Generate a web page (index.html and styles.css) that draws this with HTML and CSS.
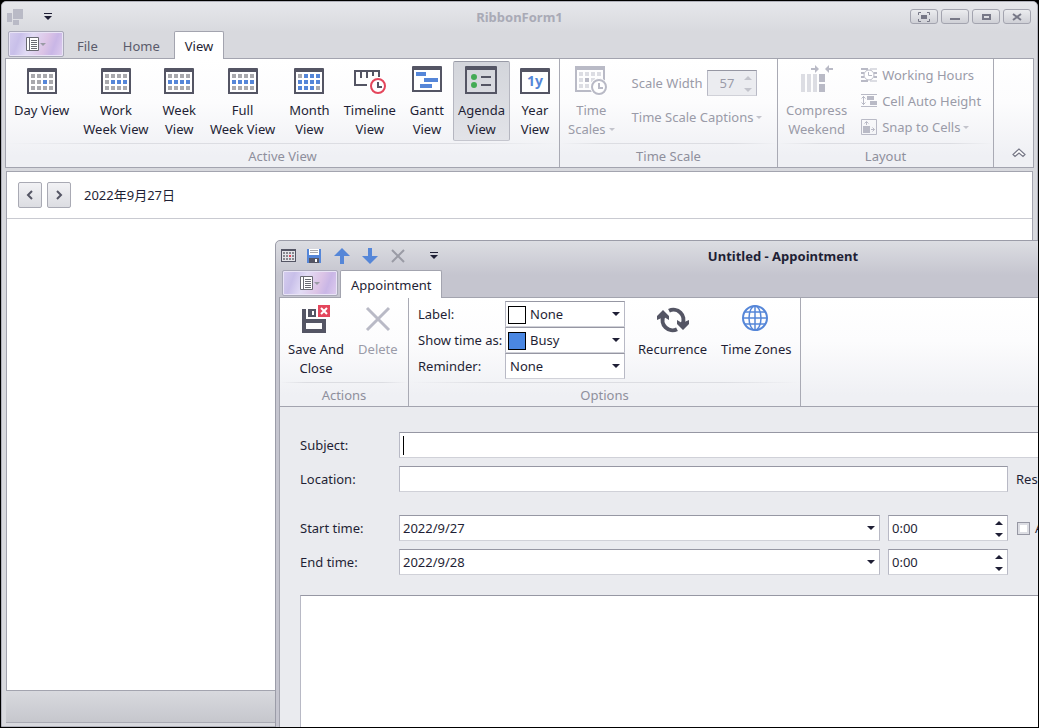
FILE: index.html
```html
<!DOCTYPE html>
<html lang="en">
<head>
    <meta charset="UTF-8">
    <meta name="viewport" content="width=device-width, initial-scale=1.0">
    <title>RibbonForm1</title>
    <link rel="stylesheet" href="styles.css">
</head>
<body>
    <!-- Shared icon parts -->
    <svg class="defs" width="0" height="0">
        <defs>
            <g id="frame">
                <path fill="#545564" fill-rule="evenodd" d="M1 4q0-1 1-1h28q1 0 1 1v25H1zM3 7v20h26V7z"/>
                <path fill="#fff" d="M3 7h26v20H3z"/>
            </g>
            <path id="cells" d="M5 9h4v4H5zM11 9h4v4h-4zM17 9h4v4h-4zM23 9h4v4h-4zM5 15h4v4H5zM11 15h4v4h-4zM17 15h4v4h-4zM23 15h4v4h-4zM5 21h4v4H5zM11 21h4v4h-4zM17 21h4v4h-4zM23 21h4v4h-4z"/>
            <g id="menu">
                <path fill="#fff" stroke="#696a72" d="M.5 .5h12v13H.5z"/>
                <path fill="none" stroke="#696a72" d="M3.500 0v14M5 3.500h6M5 5.500h6M5 7.500h6M5 9.500h6M5 11.500h6"/>
                <path fill="#9a9ba5" d="M14 6h6l-3 3z"/>
            </g>
            <path id="customize" fill="#1f1f35" d="M0 0h8v1H0zM0 3h8L4 7z"/>
        </defs>
    </svg>

    <div class="desktop">
        <main class="window main-window">
            <header class="titlebar inactive">
                <div class="quick-access">
                    <svg class="logo" width="16" height="16" fill="#b9bac6"><path d="M0 4h5v9H0zM6 0h10v10H6zM6 11h6v5H6z"/></svg>
                    <button class="tool" aria-label="Customize"><svg width="8" height="8"><use href="#customize"/></svg></button>
                </div>
                <h1>RibbonForm1</h1>
                <div class="window-buttons">
                    <button aria-label="Full screen"><svg width="12" height="10" fill="none" stroke="#777887"><path d="M3 .5H.5V3M9 .5h2.500V3M.5 7v2.500H3M11.500 7v2.500H9"/><path stroke-width="2" d="M4 4h4v2H4z"/></svg></button>
                    <button aria-label="Minimize"><svg width="12" height="10"><path fill="#777887" d="M1 6h10v2H1z"/></svg></button>
                    <button aria-label="Maximize"><svg width="12" height="10"><path fill="none" stroke="#777887" stroke-width="2" d="M3 3h7v4H3z"/></svg></button>
                    <button aria-label="Close"><svg width="12" height="10"><path fill="none" stroke="#777887" stroke-width="2" d="M2 2l8 6M10 2L2 8"/></svg></button>
                </div>
            </header>
            <nav class="tabs">
                <button class="app-button" aria-label="Application menu"><svg width="20" height="14"><use href="#menu"/></svg></button>
                <button class="tab">File</button>
                <button class="tab">Home</button>
                <button class="tab active">View</button>
            </nav>
            <div class="ribbon ribbon-main">
                <section class="group">
                    <div class="items">
                        <button class="large"><svg width="32" height="32"><use href="#frame"/><use href="#cells" fill="#a9a9ad"/><path fill="#5586d8" d="M17 15h4v4h-4z"/></svg><span>Day View</span></button>
                        <button class="large"><svg width="32" height="32"><use href="#frame"/><use href="#cells" fill="#a9a9ad"/><path fill="#5586d8" d="M11 15h4v4h-4zM17 15h4v4h-4zM23 15h4v4h-4z"/></svg><span>Work<br>Week View</span></button>
                        <button class="large"><svg width="32" height="32"><use href="#frame"/><use href="#cells" fill="#a9a9ad"/><path fill="#5586d8" d="M5 15h4v4H5zM11 15h4v4h-4zM17 15h4v4h-4zM23 15h4v4h-4z"/></svg><span>Week<br>View</span></button>
                        <button class="large"><svg width="32" height="32"><use href="#frame"/><use href="#cells" fill="#a9a9ad"/><path fill="#5586d8" d="M5 15h4v4H5zM11 15h4v4h-4zM17 15h4v4h-4zM23 15h4v4h-4z"/></svg><span>Full<br>Week View</span></button>
                        <button class="large"><svg width="32" height="32"><use href="#frame"/><use href="#cells" fill="#5586d8"/><path fill="#a9a9ad" d="M5 9h4v4H5zM23 21h4v4h-4z"/></svg><span>Month<br>View</span></button>
                        <button class="large"><svg width="32" height="32" fill="none" stroke="#545564" stroke-width="2">
                            <path d="M13 20H1V6h24v6M7 6v7M13 6v7M19 6v5"/>
                            <circle cx="24" cy="21" r="9" fill="#fff" stroke="none"/>
                            <circle cx="24" cy="21" r="7" fill="#fff" stroke="#e4465c"/>
                            <path d="M24 17v5h4"/>
                        </svg><span>Timeline<br>View</span></button>
                        <button class="large"><svg width="32" height="32"><path fill="#545564" d="M1 2q0-1 1-1h28q1 0 1 1v25H1z"/><path fill="#fff" d="M3 5h26v20H3z"/><path fill="#5586d8" d="M5 7h10v4H5zM13 13h14v4H13zM9 19h12v4H9z"/></svg><span>Gantt<br>View</span></button>
                        <button class="large selected"><svg width="32" height="32"><path fill="#545564" fill-rule="evenodd" d="M0 2q0-1 1-1h30q1 0 1 1v27H0zM2 5v22h28V5z"/><path fill="#44ab55" d="M6 12a3 3 0 1 0 6 0a3 3 0 1 0-6 0M6 20a3 3 0 1 0 6 0a3 3 0 1 0-6 0"/><path fill="#545564" d="M16 11h10v2H16zM16 19h10v2H16z"/></svg><span>Agenda<br>View</span></button>
                        <button class="large"><svg width="32" height="32"><use href="#frame"/><text class="icon-text" x="16" y="21" text-anchor="middle">1y</text></svg><span>Year<br>View</span></button>
                    </div>
                    <h2>Active View</h2>
                </section>
                <section class="group">
                    <div class="items">
                        <button class="large" disabled><svg width="32" height="32">
                            <path fill="#b9bac6" fill-rule="evenodd" d="M0 1h30v26H0zM2 5v20h26V5z"/>
                            <use href="#cells" x="-1" y="-2" fill="#dcdde3"/>
                            <path fill="#b9bac6" d="M10 13h4v4h-4z"/>
                            <circle cx="24" cy="22" r="9" fill="#fff"/>
                            <circle cx="24" cy="22" r="7" fill="#fff" stroke="#b9bac6" stroke-width="2"/>
                            <path fill="none" stroke="#b9bac6" stroke-width="2" d="M24 18v5h4"/>
                        </svg><span>Time<br><span class="drop">Scales</span></span></button>
                        <div class="scale-options">
                            <div class="scale-width">
                                <label for="scaleWidth">Scale Width</label>
                                <div class="field spin">
                                    <input type="text" id="scaleWidth" value="57" disabled>
                                    <span class="spin-buttons"><button aria-label="Increase" disabled></button><button aria-label="Decrease" disabled></button></span>
                                </div>
                            </div>
                            <button class="small" disabled><span class="drop">Time Scale Captions</span></button>
                        </div>
                    </div>
                    <h2>Time Scale</h2>
                </section>
                <section class="group">
                    <div class="items">
                        <button class="large" disabled><svg width="32" height="32">
                            <path fill="#dcdde3" d="M0 9h4v18H0zM6 9h4v18H6zM12 9h4v18h-4z"/>
                            <path fill="#b9bac6" d="M18 9h6v8h-6zM18 19h6v8h-6zM10 3h4V0l4 4-4 4V5h-4zM32 3h-4V0l-4 4 4 4V5h4z"/>
                        </svg><span>Compress<br>Weekend</span></button>
                        <div class="small-list">
                            <button class="small" disabled><svg width="16" height="16">
                                <path fill="#b9bac6" d="M0 1h7v2H0zM0 5h3v2H0zM13 5h3v2h-3zM0 9h3v2H0zM13 9h3v2h-3zM0 13h7v2H0z"/>
                                <path fill="#dcdde3" d="M9 1h7v2H9zM9 13h7v2H9z"/>
                                <circle cx="8" cy="8" r="5" fill="#fff" stroke="#b9bac6"/><path fill="none" stroke="#b9bac6" d="M7.500 5v3.500H11"/>
                            </svg>Working Hours</button>
                            <button class="small" disabled><svg width="16" height="16">
                                <path fill="#b9bac6" d="M0 1h16v1H0zM0 13h16v1H0zM6 3h7v4H6zM9 8h7v4H9z"/>
                                <path fill="none" stroke="#b9bac6" d="M2.500 3v9M.5 5.500l2-2 2 2M.5 9.500l2 2 2-2"/>
                            </svg>Cell Auto Height</button>
                            <button class="small" disabled><svg width="16" height="16">
                                <path fill="#b9bac6" d="M2 7h7v7H2z"/>
                                <path fill="none" stroke="#b9bac6" d="M.5 .5h15v15H.5zM5.500 6V2.500M3.500 4.500l2-2 2 2M10 10.500h3.500M11.500 8.500l2 2-2 2"/>
                            </svg><span class="drop">Snap to Cells</span></button>
                        </div>
                    </div>
                    <h2>Layout</h2>
                </section>
                <button class="collapse" aria-label="Collapse ribbon"><svg width="14" height="10"><path fill="#fff" stroke="#777887" stroke-width="1.200" d="M7 1L1 6.500 3 8.500 7 5l4 3.500 2-2z"/></svg></button>
            </div>
            <div class="agenda">
                <div class="agenda-header">
                    <button aria-label="Previous"><svg width="8" height="10"><path d="M6 1L2 5l4 4"/></svg></button>
                    <button aria-label="Next"><svg width="8" height="10"><path d="M2 1l4 4-4 4"/></svg></button>
                    <span lang="zh">2022年9月27日</span>
                </div>
            </div>
            <footer class="statusbar"></footer>
        </main>

        <div class="window dialog" role="dialog" aria-labelledby="dialogTitle">
            <header class="titlebar">
                <div class="quick-access">
                    <svg class="logo" width="16" height="16"><path fill="#545564" d="M0 1h15v13H0z"/><path fill="#e4e4e9" d="M1 3h13v10H1z"/><path fill="#88888f" d="M2 4h2v2H2zM5 4h2v2H5zM8 4h2v2H8zM11 4h2v2h-2zM2 7h2v2H2zM5 7h2v2H5zM11 7h2v2h-2zM2 10h2v2H2zM5 10h2v2H5zM8 10h2v2H8zM11 10h2v2h-2z"/><path fill="#e4465c" d="M8 7h2v2H8z"/></svg>
                    <button class="tool" aria-label="Save"><svg width="16" height="16"><path fill="#5586d8" d="M1 1h14v14H1z"/><path fill="#fff" d="M3 1h10v6H3z"/><path fill="#545564" d="M3 10h10v5H3z"/><path fill="#fff" d="M9 11h2v3H9z"/><path stroke="#a9a9ad" d="M4 2.500h8M4 4.500h8"/></svg></button>
                    <button class="tool" aria-label="Previous item"><svg width="16" height="16"><path fill="#5586d8" d="M8 0l8 8h-6v8H6V8H0z"/></svg></button>
                    <button class="tool" aria-label="Next item"><svg width="16" height="16"><path fill="#5586d8" d="M8 16l8-8h-6V0H6v8H0z"/></svg></button>
                    <button class="tool" aria-label="Delete item"><svg width="16" height="16"><path stroke="#9a9ba5" stroke-width="2" d="M2 2l12 12M14 2L2 14"/></svg></button>
                    <button class="tool customize" aria-label="Customize"><svg width="8" height="8"><use href="#customize"/></svg></button>
                </div>
                <h1 id="dialogTitle">Untitled - Appointment</h1>
            </header>
            <nav class="tabs">
                <button class="app-button" aria-label="Application menu"><svg width="20" height="14"><use href="#menu"/></svg></button>
                <button class="tab active">Appointment</button>
            </nav>
            <div class="ribbon ribbon-dialog">
                <section class="group">
                    <div class="items">
                        <button class="large"><svg width="32" height="32">
                            <path fill="#545564" fill-rule="evenodd" d="M2 5h4v10h20v14H2zM6 19v6h16v-6z"/>
                            <path fill="#545564" fill-rule="evenodd" d="M8 5h8v8H8zM12 7v4h2V7z"/>
                            <path fill="#e4465c" d="M18 1h12v12H18z"/>
                            <path stroke="#fff" stroke-width="2" d="M21 4l6 6M27 4l-6 6"/>
                        </svg><span>Save And<br>Close</span></button>
                        <button class="large" disabled><svg width="32" height="32"><path stroke="#b9bac6" stroke-width="3" d="M5 4l22 22M27 4L5 26"/></svg><span>Delete</span></button>
                    </div>
                    <h2>Actions</h2>
                </section>
                <section class="group">
                    <div class="items">
                        <div class="combos">
                            <label for="label">Label:</label>
                            <div class="field combo swatch"><select id="label"><option>None</option></select></div>
                            <label for="status">Show time as:</label>
                            <div class="field combo swatch busy"><select id="status"><option>Busy</option></select></div>
                            <label for="reminder">Reminder:</label>
                            <div class="field combo"><select id="reminder"><option>None</option></select></div>
                        </div>
                        <button class="large"><svg width="32" height="32">
                            <path fill="none" stroke="#545564" stroke-width="4" d="M20 25.200A10 10 0 0 1 6.500 12M12 6.800A10 10 0 0 1 25.500 20"/>
                            <path fill="#545564" d="M6 6l6 6v4l-5-3-7 3v-4zM26 26l-6-6v-4l5 3 7-3v4z"/>
                        </svg><span>Recurrence</span></button>
                        <button class="large"><svg width="32" height="32" fill="none" stroke="#5586d8" stroke-width="1.500"><circle cx="15" cy="14" r="12" stroke-width="2"/><ellipse cx="15" cy="14" rx="6" ry="12"/><path d="M15 2v24M3 14h24M5 8h20M5 20h20"/></svg><span>Time Zones</span></button>
                    </div>
                    <h2>Options</h2>
                </section>
            </div>
            <form class="appointment">
                <div class="fields">
                    <label for="subject">Subject:</label>
                    <div class="field subject"><input type="text" id="subject"></div>
                    <label for="location">Location:</label>
                    <div class="field location"><input type="text" id="location"></div>
                    <span>Resource:</span>
                </div>
                <div class="fields times">
                    <label for="startDate">Start time:</label>
                    <div class="field combo"><input type="text" id="startDate" value="2022/9/27"></div>
                    <div class="field spin">
                        <input type="text" aria-label="Start hour" value="0:00">
                        <span class="spin-buttons"><button type="button" aria-label="Later"></button><button type="button" aria-label="Earlier"></button></span>
                    </div>
                    <label class="all-day"><input type="checkbox">All day event</label>
                    <label for="endDate">End time:</label>
                    <div class="field combo"><input type="text" id="endDate" value="2022/9/28"></div>
                    <div class="field spin">
                        <input type="text" aria-label="End hour" value="0:00">
                        <span class="spin-buttons"><button type="button" aria-label="Later"></button><button type="button" aria-label="Earlier"></button></span>
                    </div>
                </div>
                <textarea class="memo" aria-label="Description"></textarea>
            </form>
        </div>
    </div>
</body>
</html>
```
FILE: styles.css
```css
* {
    box-sizing: border-box;
}
body {
    margin: 0;
    background: #000;
    color: #1f1f35;
    font-family: "Noto Sans", "Noto Sans CJK SC", sans-serif;
    font-size: 13px;
    line-height: 19px;
}
button, input, select, textarea {
    margin: 0;
    padding: 0;
    border: 0;
    background: none;
    color: inherit;
    font: inherit;
    outline: none;
}
h1, h2 {
    margin: 0;
    font-size: 13px;
    line-height: 19px;
}
.defs {
    position: absolute;
}
.desktop {
    position: relative;
    height: 100vh;
    border: 1px solid #000;
    overflow: clip;
}

/* Windows */
.window {
    display: flex;
    flex-direction: column;
    padding: 0 3px;
    border: 1px solid #9b9ca8;
    border-radius: 5px 5px 0 0;
}
.main-window {
    height: 100%;
    padding-bottom: 3px;
    border-color: #b0b1bb;
    background: #d8d9de linear-gradient(#e6e7eb, #d8d9de 30px) no-repeat;
}
.dialog {
    position: absolute;
    top: 239px;
    left: 274px;
    width: 1016px;
    height: 640px;
    background: #c5c5cf linear-gradient(#dcdde2, #c5c5cf 34px) no-repeat;
}
.titlebar {
    display: grid;
    grid-template-columns: 1fr auto 1fr;
    align-items: center;
    height: 29px;
    flex: none;
}
.titlebar h1 {
    grid-column: 2;
    padding-top: 2px;
}
.inactive h1 {
    color: #a9aab6;
}
.quick-access {
    display: flex;
    align-items: center;
    gap: 12px;
    padding-left: 2px;
}
.tool {
    display: flex;
    justify-content: center;
    width: 16px;
}
.inactive .tool {
    margin-left: 5px;
}
.customize {
    margin-left: 8px;
}
.dialog .quick-access .logo {
    margin-right: -3px;
}
.window-buttons {
    display: flex;
    justify-content: flex-end;
    gap: 3px;
    padding-right: 3px;
}
.window-buttons button {
    display: flex;
    justify-content: center;
    align-items: center;
    width: 28px;
    height: 15px;
    border: 1px solid #a3a4af;
    border-radius: 3px;
    background: linear-gradient(#ebecef, #cfd0d6);
}

/* Tabs */
.tabs {
    display: flex;
    gap: 3px;
    height: 28px;
    flex: none;
    margin-bottom: -1px;
    padding-left: 3px;
    z-index: 1;
}
.app-button {
    display: flex;
    justify-content: center;
    align-items: center;
    width: 56px;
    height: 26px;
    margin-right: -1px;
    border: 1px solid #a9a9b9;
    border-radius: 2px;
    background: linear-gradient(110deg, #d5cdee, #c8bfe9 20%, #e2dcf5 40%, #dcc4e6 65%, #c9b6e6 80%, #dfcdee);
    box-shadow: inset 0 0 0 1px #e9e4f6;
}
.tab {
    padding: 2px 10px 0;
    border: 1px solid transparent;
    color: #5a5b6b;
}
.tab.active {
    border-color: #a3a4af;
    border-bottom: 0;
    border-radius: 2px 2px 0 0;
    background: #fff;
    color: #1f1f35;
}

/* Ribbon */
.ribbon {
    display: grid;
    height: 110px;
    flex: none;
    border: 1px solid #a3a4af;
    background: linear-gradient(#fff, #fcfcfd 40%, #eff0f4 90%);
}
.ribbon-main {
    grid-template-columns: 554px 218px 216px 1fr;
}
.ribbon-dialog {
    grid-template-columns: 129px 392px 1fr;
}
.group {
    display: flex;
    flex-direction: column;
    border-right: 1px solid #a9aab4;
}
.items {
    display: flex;
    flex: 1;
    gap: 4px;
    padding: 2px 3px;
}
.group h2 {
    height: 24px;
    padding-top: 4px;
    background: linear-gradient(90deg, transparent, #dcdde2 20%, #dcdde2 80%, transparent) top / 100% 1px no-repeat;
    color: #8e8f9c;
    font-weight: normal;
    text-align: center;
}
.large {
    display: flex;
    flex-direction: column;
    align-items: center;
    gap: 4px;
    height: 80px;
    padding: 3px 4px;
    border: 1px solid transparent;
    border-radius: 2px;
    text-align: center;
    white-space: nowrap;
}
.large svg {
    flex: none;
}
.large.selected {
    border-color: #989aa6 #b5b6c0 #c5c6ce;
    background: linear-gradient(#d3d5db, #e2e3e8);
}
button:disabled, .scale-width {
    color: #9a9ba8;
}
.icon-text {
    fill: #5586d8;
    font: bold 14px "Noto Sans", sans-serif;
}
.drop::after {
    content: "";
    display: inline-block;
    margin-left: 3px;
    border: 3px solid transparent;
    border-top-color: #c3c4cc;
    border-bottom: 0;
    vertical-align: 3px;
}
.scale-options {
    display: flex;
    flex-direction: column;
    align-items: flex-start;
    gap: 12px;
    padding: 9px 0 0 8px;
}
.scale-width {
    display: flex;
    align-items: center;
    gap: 4px;
}
.scale-width .field {
    width: 50px;
    background: #ebecf0;
}
.scale-width .field input {
    padding-left: 12px;
}
.small-list {
    display: flex;
    flex-direction: column;
    padding: 1px 0 0 5px;
}
.small {
    display: flex;
    align-items: center;
    gap: 5px;
    white-space: nowrap;
}
.small-list .small {
    height: 26px;
}
.collapse {
    place-self: end;
    padding: 0 7px 4px;
}

/* Fields */
.field {
    position: relative;
    display: flex;
    height: 26px;
    border: 1px solid #b8b9c5;
    border-top-color: #9697a3;
    border-bottom-color: #d0d1d8;
    background: #fff;
}
.field input, .field select {
    flex: 1;
    width: 0;
    padding: 0 3px;
    appearance: none;
}
.field select {
    padding: 0 4px;
}
.combo::after {
    content: "";
    position: absolute;
    top: 10px;
    right: 4px;
    border: 4px solid transparent;
    border-width: 4px 4px 0;
    border-top-color: #1f1f35;
    pointer-events: none;
}
.field.swatch select {
    padding-left: 24px;
}
.swatch::before {
    content: "";
    position: absolute;
    top: 4px;
    left: 2px;
    width: 16px;
    height: 16px;
    border: 1px solid #000;
    background: #fff;
}
.busy::before {
    background: #4a87e2;
}
.combos {
    display: grid;
    grid-template-columns: 84px 120px;
    grid-auto-rows: 26px;
    align-items: center;
    gap: 0 3px;
    margin: 1px 4px 0 6px;
    align-self: start;
    white-space: nowrap;
}
.spin-buttons {
    display: flex;
    flex-direction: column;
    justify-content: space-between;
    padding: 5px 4px 3px;
}
.spin-buttons button {
    border: 0 solid transparent;
    border-width: 0 4px 4px;
    border-bottom-color: #1f1f35;
}
.spin-buttons button:last-child {
    border-width: 4px 4px 0;
    border-top-color: #1f1f35;
}
.spin-buttons button:disabled {
    border-bottom-color: #c3c4cc;
}
.spin-buttons button:last-child:disabled {
    border-top-color: #c3c4cc;
}

/* Agenda */
.agenda {
    flex: 1;
    margin: 3px 1px 0;
    border: 1px solid #a3a4af;
    background: #fff;
}
.agenda-header {
    display: flex;
    align-items: center;
    gap: 5px;
    height: 47px;
    padding-left: 11px;
    border-bottom: 1px solid #c9cad1;
}
.agenda-header button {
    display: flex;
    justify-content: center;
    align-items: center;
    width: 24px;
    height: 26px;
    border: 1px solid #a9aab4;
    border-radius: 2px;
    background: linear-gradient(#f2f2f5, #dcdde2);
}
.agenda-header path {
    fill: none;
    stroke: #545564;
    stroke-width: 2;
}
.agenda-header span {
    margin-left: 8px;
}
.statusbar {
    height: 32px;
    flex: none;
    margin: 0 1px;
    border-bottom: 1px solid #a9aab4;
    background: linear-gradient(#d8d9de, #c6c7cd);
}

/* Appointment form */
.appointment {
    display: flex;
    flex-direction: column;
    flex: 1;
    gap: 23px;
    padding: 25px 20px 0;
    border: 1px solid #a3a4af;
    border-top: 0;
    background: #eaebef;
}
.fields {
    display: grid;
    grid-template-columns: 91px 481px 120px 1fr;
    align-items: center;
    gap: 8px;
    white-space: nowrap;
}
.times {
    margin-bottom: -3px;
}
.subject {
    grid-column: 2 / -1;
}
/* Text cursor of the active field */
.subject::before {
    content: "";
    position: absolute;
    top: 3px;
    left: 3px;
    width: 1px;
    height: 19px;
    background: #000;
}
.subject input {
    caret-color: transparent;
}
.location {
    grid-column: 2 / 4;
}
.all-day {
    display: flex;
    align-items: center;
    gap: 5px;
}
.all-day input {
    appearance: none;
    width: 13px;
    height: 13px;
    margin-left: 1px;
    border: 1px solid #9697a3;
    background: #fff;
    box-shadow: inset 0 0 0 2px #dcdde3;
}
.memo {
    flex: 1;
    border: 1px solid #b8b9c5;
    border-top-color: #9697a3;
    background: #fff;
    resize: none;
}
```
